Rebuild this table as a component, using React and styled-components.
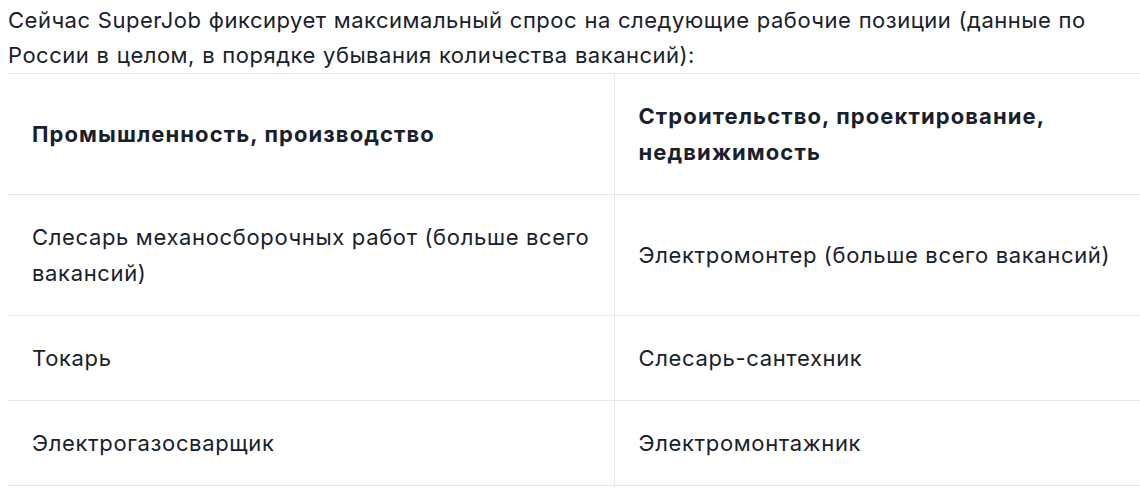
import styled, { createGlobalStyle } from 'styled-components';

const GlobalStyle = createGlobalStyle`
  html, body {
    margin: 0;
    padding: 0;
    background: #ffffff;
  }
  body {
    font-family: Inter, "Noto Sans", sans-serif;
    color: #18212b;
  }
`;

const Page = styled.div`
  padding: 3px 0 0 8px;
`;

const Lead = styled.p`
  margin: 0;
  font-size: 22px;
  line-height: 35px;
  letter-spacing: 0.5px;
  word-spacing: 0.6px;
`;

const Table = styled.table`
  width: 100%;
  table-layout: fixed;
  border-collapse: collapse;
  font-size: 22px;
  line-height: 36px;
`;

const Row = styled.tr`
  border-top: 1px solid #e6e7e9;
  border-bottom: 1px solid #e6e7e9;
`;

const Cell = styled.td`
  box-sizing: border-box;
  padding: 24px 14px 24px 24px;
  vertical-align: middle;
  text-align: left;
  width: ${({ $first }) => ($first ? '606px' : 'auto')};
  border-left: ${({ $first }) => ($first ? 'none' : '1px solid #e6e7e9')};
  font-weight: ${({ $head }) => ($head ? 700 : 400)};
  letter-spacing: ${({ $head }) => ($head ? '1.1px' : '0.65px')};
`;

const rows = [
  ['Слесарь механосборочных работ (больше всего вакансий)', 'Электромонтер (больше всего вакансий)'],
  ['Токарь', 'Слесарь-сантехник'],
  ['Электрогазосварщик', 'Электромонтажник'],
];

export default function App() {
  return (
    <Page>
      <GlobalStyle />
      <Lead>
        Сейчас SuperJob фиксирует максимальный спрос на следующие рабочие позиции (данные по
        России в целом, в порядке убывания количества вакансий):
      </Lead>
      <Table>
        <tbody>
          <Row>
            <Cell as="th" $first $head>Промышленность, производство</Cell>
            <Cell as="th" $head>Строительство, проектирование, недвижимость</Cell>
          </Row>
          {rows.map(([a, b]) => (
            <Row key={a}>
              <Cell $first>{a}</Cell>
              <Cell>{b}</Cell>
            </Row>
          ))}
        </tbody>
      </Table>
    </Page>
  );
}
